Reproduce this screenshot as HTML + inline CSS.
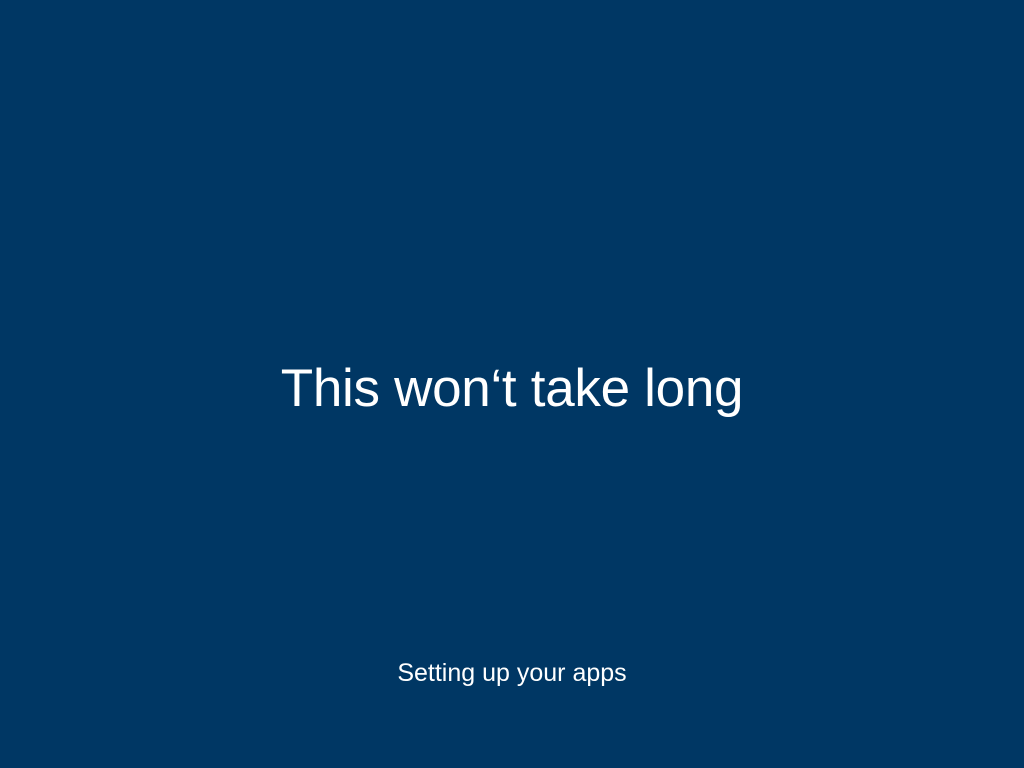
<!DOCTYPE html>
<html><head><style>
html,body{margin:0;padding:0;width:1024px;height:768px;background:#003764;overflow:hidden}
.t{position:absolute;left:0;width:1024px;text-align:center;color:#fff;font-family:"Liberation Sans",sans-serif;font-weight:300;white-space:nowrap}
#a{top:358px;font-size:53px;letter-spacing:-0.3px}
#b{top:659px;font-size:25px}
</style></head><body>
<div class="t" id="a">This won‘t take long</div>
<div class="t" id="b">Setting up your apps</div>
</body></html>
